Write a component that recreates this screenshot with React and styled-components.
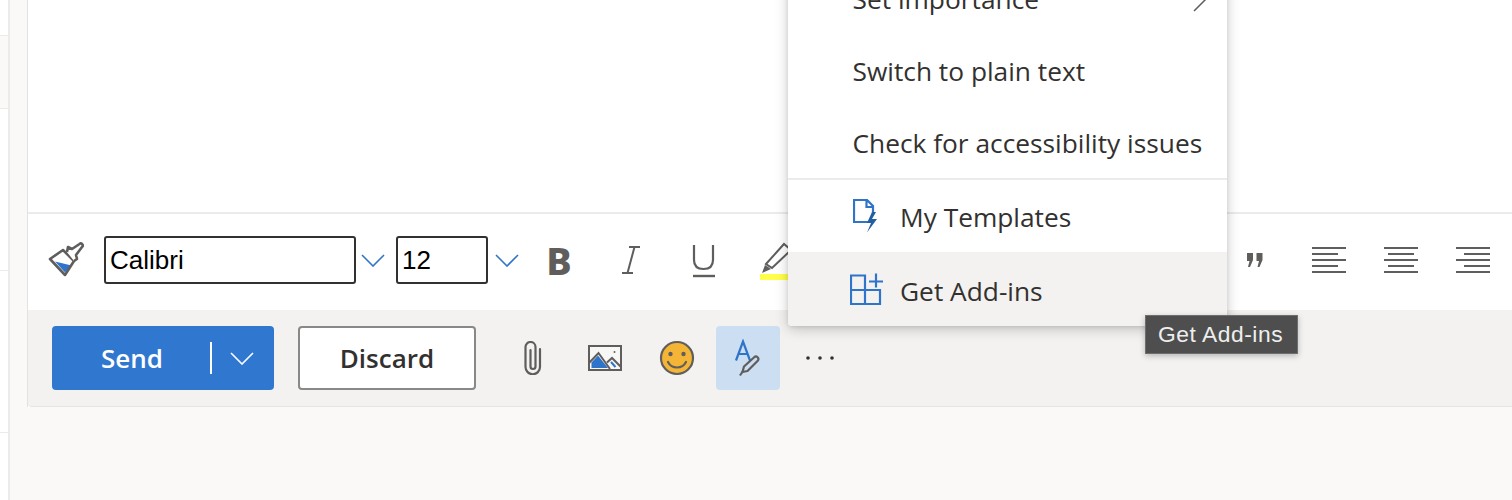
import styled, { createGlobalStyle } from "styled-components";

const GRAY = "#605e5c";
const BLUE = "#2f74c9";

const GlobalStyle = createGlobalStyle`
  html, body {
    margin: 0;
    height: 500px;
    overflow: hidden;
    background: #faf9f8;
    font-family: "Open Sans", "Noto Sans", sans-serif;
  }
`;

const Page = styled.div`
  display: flex;
  height: 500px;
  overflow: hidden;
`;

const Rail = styled.div`
  width: 8px;
  flex: none;
  background: #fff;
  border-right: 2px solid #edebe9;
  padding-top: 35px;
`;

const RailRow = styled.div`
  height: ${({ $h }) => $h}px;
  box-sizing: border-box;
  border-top: 1px solid #edebe9;
  background: ${({ $shaded }) => ($shaded ? "#faf9f8" : "#fff")};
`;

const Main = styled.div`
  flex: 1;
  min-width: 0;
  padding-left: 17px;
`;

const Compose = styled.div`
  position: relative;
  height: 407px;
  border-left: 1px solid #e4e2e0;
  display: flex;
  flex-direction: column;
  background: #fff;
`;

const Body = styled.div`
  height: 212px;
  flex: none;
  border-bottom: 2px solid #edebe9;
`;

const FormatBar = styled.div`
  height: 96px;
  flex: none;
  box-sizing: border-box;
  padding: 0 3px 4px 20px;
  display: flex;
  align-items: center;
  justify-content: space-between;
`;

const BarGroup = styled.div`
  display: flex;
  align-items: center;
`;

const ToolButton = styled.div`
  width: 72px;
  height: 64px;
  flex: none;
  margin-right: ${({ $mr }) => $mr || 0}px;
  display: flex;
  align-items: center;
  justify-content: center;
  font-family: "Noto Sans", sans-serif;
  font-weight: 800;
  font-size: 38px;
  color: ${GRAY};
`;

const BrushSlot = styled.div`
  width: 36px;
  height: 36px;
  margin-right: 20px;
  display: flex;
`;

const FieldBox = styled.div`
  width: ${({ $w }) => $w}px;
  height: 48px;
  box-sizing: border-box;
  border: 2px solid #323130;
  border-radius: 3px;
  padding-left: 4px;
  display: flex;
  align-items: center;
  background: #fff;
  font-family: "Liberation Sans", Arial, sans-serif;
  font-size: 26px;
  color: #000;
`;

const DropSlot = styled.div`
  width: ${({ $w }) => $w}px;
  box-sizing: border-box;
  padding-left: ${({ $pad }) => $pad}px;
  display: flex;
  align-items: center;
`;

const ActionBar = styled.div`
  flex: 1;
  display: flex;
  align-items: flex-start;
  padding: 16px 0 0 24px;
  background: #f3f2f1;
  border-bottom: 1px solid #e6e4e2;
  border-bottom-left-radius: 4px;
`;

const SendButton = styled.div`
  width: 222px;
  height: 64px;
  flex: none;
  display: flex;
  align-items: center;
  background: #2f77cf;
  border-radius: 4px;
  color: #fff;
  font-size: 26px;
  font-weight: 600;
`;

const SendLabel = styled.span`
  width: 158px;
  box-sizing: border-box;
  padding-left: 2px;
  text-align: center;
`;

const SendDivider = styled.span`
  width: 2px;
  height: 32px;
  background: #fff;
`;

const SendCaret = styled.span`
  flex: 1;
  padding-right: 2px;
  display: flex;
  justify-content: center;
`;

const DiscardButton = styled.div`
  width: 178px;
  height: 64px;
  flex: none;
  box-sizing: border-box;
  margin-left: 24px;
  margin-right: 21px;
  display: flex;
  align-items: center;
  justify-content: center;
  background: #fff;
  border: 2px solid #8a8886;
  border-radius: 4px;
  color: #323130;
  font-size: 26px;
  font-weight: 600;
`;

const IconButton = styled.div`
  width: 64px;
  height: 64px;
  margin: ${({ $active }) => ($active ? "0 5px 0 3px" : "0 4px")};
  flex: none;
  display: flex;
  align-items: center;
  justify-content: center;
  border-radius: 4px;
  background: ${({ $active }) => ($active ? "#cbdef2" : "transparent")};
`;

const Menu = styled.div`
  position: absolute;
  top: -37px;
  left: 760px;
  width: 439px;
  background: #fff;
  border-radius: 0 0 4px 4px;
  box-shadow: 0 3px 14px rgba(0, 0, 0, 0.2), 0 1px 4px rgba(0, 0, 0, 0.1);
`;

const MenuItem = styled.div`
  height: ${({ $h }) => $h || 72}px;
  box-sizing: border-box;
  display: flex;
  align-items: center;
  padding: ${({ $top }) => $top || 0}px 20px 0 ${({ $icon }) => ($icon ? 112 : 64.5)}px;
  position: relative;
  font-size: 26.3px;
  color: #323130;
  white-space: nowrap;
  background: ${({ $hover }) => ($hover ? "#f3f2f1" : "transparent")};
  border-bottom-left-radius: ${({ $hover }) => ($hover ? 4 : 0)}px;
  border-bottom-right-radius: ${({ $hover }) => ($hover ? 4 : 0)}px;
`;

const MenuIcon = styled.span`
  position: absolute;
  left: ${({ $left }) => $left}px;
  top: 50%;
  transform: translateY(-50%);
  display: flex;
`;

const MenuChevron = styled.span`
  position: absolute;
  right: 20px;
  top: 50%;
  transform: translateY(-50%);
  display: flex;
`;

const MenuDivider = styled.div`
  height: 2px;
  background: #edebe9;
`;

const Tooltip = styled.div`
  position: absolute;
  left: 1117px;
  top: 315px;
  height: 39px;
  box-sizing: border-box;
  padding: 0 14px 0 12px;
  display: flex;
  align-items: center;
  background: #4e4e4e;
  border: 1px solid #6e6e6e;
  box-shadow: 0 2px 6px rgba(0, 0, 0, 0.25);
  color: #eee;
  font-family: "Liberation Sans", Arial, sans-serif;
  font-size: 22.8px;
  letter-spacing: 0.55px;
  white-space: nowrap;
`;

const Chevron = ({ color = BLUE, w = 24, h = 13 }) => (
  <svg width={w} height={h} viewBox="0 0 24 13" fill="none">
    <path d="M1 1l11 11L23 1" stroke={color} strokeWidth="1.6" />
  </svg>
);

const BrushIcon = () => (
  <svg width="36" height="36" viewBox="0 0 36 36" fill="none">
    <path d="M7 19.500l16.500 4L17 30.500z" fill={BLUE} />
    <path d="M2 17L15 8l11 11-9 14z" stroke={GRAY} strokeWidth="2.600" strokeLinejoin="round" />
    <path d="M19 10l1-5 4 2 7.500-5a1.800 1.800 0 0 1 2.500 3L28 13l1 4-3 2" stroke={GRAY} strokeWidth="2.600" strokeLinejoin="round" fill="#fff" />
  </svg>
);

const ItalicIcon = () => (
  <svg width="20" height="30" viewBox="0 0 20 30" fill="none" stroke={GRAY} strokeWidth="2">
    <path d="M8 2h11M1 28h11M13.500 2L6.500 28" />
  </svg>
);

const UnderlineIcon = () => (
  <svg width="24" height="36" viewBox="0 0 24 36" fill="none" stroke={GRAY} strokeWidth="2.200">
    <path d="M3 3v15c0 6 3 9 9.500 9s9.500-3 9.500-9V3" />
    <path d="M2 34h22" strokeWidth="2.400" />
  </svg>
);

const HighlightIcon = () => (
  <svg width="34" height="40" viewBox="0 0 34 40" fill="none">
    <rect x="2" y="34" width="32" height="6" fill="#ffff4a" />
    <path d="M4 33l3-8 6 4z" fill={GRAY} />
    <path d="M8 24L26 4l7 6-19 18z" stroke={GRAY} strokeWidth="2" fill="#fff" />
  </svg>
);

const QuoteIcon = () => (
  <svg width="16" height="14" viewBox="0 0 16 14" fill={GRAY}>
    <path d="M0 0h6v7l-3 7H1l1.500-6H0zM9.500 0h6v7l-3 7h-2l1.500-6h-2.500z" />
  </svg>
);

const AlignIcon = ({ mode }) => {
  const inset = { left: 0, center: 4, right: 8 }[mode];
  return (
    <svg width="34" height="26" viewBox="0 0 34 26" fill={GRAY}>
      {[0, 6, 12, 18, 24].map((y, i) => (
        <rect key={y} x={i % 2 ? inset : 0} y={y} width={i % 2 ? 26 : 34} height="2" />
      ))}
    </svg>
  );
};

const PaperclipIcon = () => (
  <svg width="18" height="34" viewBox="0 0 18 34" fill="none" stroke={GRAY} strokeWidth="2.200" strokeLinecap="round">
    <path d="M16 8v18a7.250 7.250 0 0 1-14.500 0V6a5 5 0 0 1 10 0v19.500a2.500 2.500 0 0 1-5 0V9" />
  </svg>
);

const ImageIcon = () => (
  <svg width="34" height="26" viewBox="0 0 34 26" fill="none">
    <rect x="1" y="1" width="32" height="24" stroke={GRAY} strokeWidth="2" fill="#f7f7f6" />
    <path d="M3.500 23v-5.500L10 10.500l10 12.500z" fill={BLUE} />
    <path d="M1 18l9.500-10L22 24M19 17.500l5-4.500 9 9" stroke={GRAY} strokeWidth="2" />
    <path d="M23 17l4.500 5" stroke={BLUE} strokeWidth="2" />
    <circle cx="26.500" cy="7" r="1" fill={GRAY} />
  </svg>
);

const SmileIcon = () => (
  <svg width="36" height="36" viewBox="0 0 36 36">
    <circle cx="18" cy="18" r="16" fill="#f4b536" stroke={GRAY} strokeWidth="2.200" />
    <circle cx="11.500" cy="14" r="2.200" fill={GRAY} />
    <circle cx="24.500" cy="14" r="2.200" fill={GRAY} />
    <path d="M9 22c2 4 5.500 5.500 9 5.500s7-1.500 9-5.500" fill="none" stroke={GRAY} strokeWidth="2.200" strokeLinecap="round" />
  </svg>
);

const EditorIcon = () => (
  <svg width="36" height="38" viewBox="0 0 36 38" fill="none">
    <path d="M6 21.500L13 2.500l7 19M8.300 15h9.400" stroke={BLUE} strokeWidth="2.200" />
    <path d="M12.500 33l1.500-5.500L24.500 18c2-1.500 5 1 3.500 3.500L17.500 32z" stroke={GRAY} strokeWidth="2.200" strokeLinejoin="round" />
    <path d="M10 36.500l3-4.500" stroke={GRAY} strokeWidth="2.200" />
  </svg>
);

const DotsIcon = () => (
  <svg width="30" height="4" viewBox="0 0 30 4" fill="#323130">
    <circle cx="2" cy="2" r="1.800" />
    <circle cx="14" cy="2" r="1.800" />
    <circle cx="26" cy="2" r="1.800" />
  </svg>
);

const TemplateIcon = () => (
  <svg width="24" height="34" viewBox="0 0 24 34" fill="none">
    <path d="M15 23H1V1h13l6 6v7M13.500 1.500V8H20" stroke={BLUE} strokeWidth="2.200" />
    <path d="M19 13l-5 11h4l-4 9.500L24 20h-5l4-7z" fill="#215f9f" />
  </svg>
);

const AddInsIcon = () => (
  <svg width="34" height="33" viewBox="0 0 34 33" fill="none" stroke={BLUE} strokeWidth="2.200">
    <path d="M1 3h14v28.500H1zM1 17.500h29v14H15" />
    <path d="M19 9h14M26 1v14" />
  </svg>
);

export default function App() {
  return (
    <>
      <GlobalStyle />
      <Page>
        <Rail>
          <RailRow $h={73} $shaded />
          <RailRow $h={162} />
          <RailRow $h={162} />
          <RailRow $h={68} />
        </Rail>
        <Main>
          <Compose>
            <Body />
            <FormatBar>
              <BarGroup>
                <BrushSlot>
                  <BrushIcon />
                </BrushSlot>
                <FieldBox $w={252}>Calibri</FieldBox>
                <DropSlot $w={40} $pad={5}>
                  <Chevron />
                </DropSlot>
                <FieldBox $w={92}>12</FieldBox>
                <DropSlot $w={35} $pad={7}>
                  <Chevron />
                </DropSlot>
                <ToolButton>B</ToolButton>
                <ToolButton>
                  <ItalicIcon />
                </ToolButton>
                <ToolButton>
                  <UnderlineIcon />
                </ToolButton>
                <ToolButton>
                  <HighlightIcon />
                </ToolButton>
              </BarGroup>
              <BarGroup>
                <ToolButton $mr={2}>
                  <QuoteIcon />
                </ToolButton>
                <ToolButton>
                  <AlignIcon mode="left" />
                </ToolButton>
                <ToolButton>
                  <AlignIcon mode="center" />
                </ToolButton>
                <ToolButton>
                  <AlignIcon mode="right" />
                </ToolButton>
              </BarGroup>
            </FormatBar>
            <ActionBar>
              <SendButton>
                <SendLabel>Send</SendLabel>
                <SendDivider />
                <SendCaret>
                  <Chevron color="#fff" />
                </SendCaret>
              </SendButton>
              <DiscardButton>Discard</DiscardButton>
              <IconButton>
                <PaperclipIcon />
              </IconButton>
              <IconButton>
                <ImageIcon />
              </IconButton>
              <IconButton>
                <SmileIcon />
              </IconButton>
              <IconButton $active>
                <EditorIcon />
              </IconButton>
              <IconButton>
                <DotsIcon />
              </IconButton>
            </ActionBar>
            <Menu>
              <MenuItem>
                Set importance
                <MenuChevron>
                  <svg width="14" height="26" viewBox="0 0 14 26" fill="none" stroke={GRAY} strokeWidth="1.500">
                    <path d="M1 1l12 12L1 25" />
                  </svg>
                </MenuChevron>
              </MenuItem>
              <MenuItem>Switch to plain text</MenuItem>
              <MenuItem $h={71}>Check for accessibility issues</MenuItem>
              <MenuDivider />
              <MenuItem $icon $h={72} $top={2}>
                <MenuIcon $left={65}>
                  <TemplateIcon />
                </MenuIcon>
                My Templates
              </MenuItem>
              <MenuItem $icon $hover $h={74} $top={3}>
                <MenuIcon $left={62}>
                  <AddInsIcon />
                </MenuIcon>
                Get Add-ins
              </MenuItem>
            </Menu>
            <Tooltip>Get Add-ins</Tooltip>
          </Compose>
        </Main>
      </Page>
    </>
  );
}
